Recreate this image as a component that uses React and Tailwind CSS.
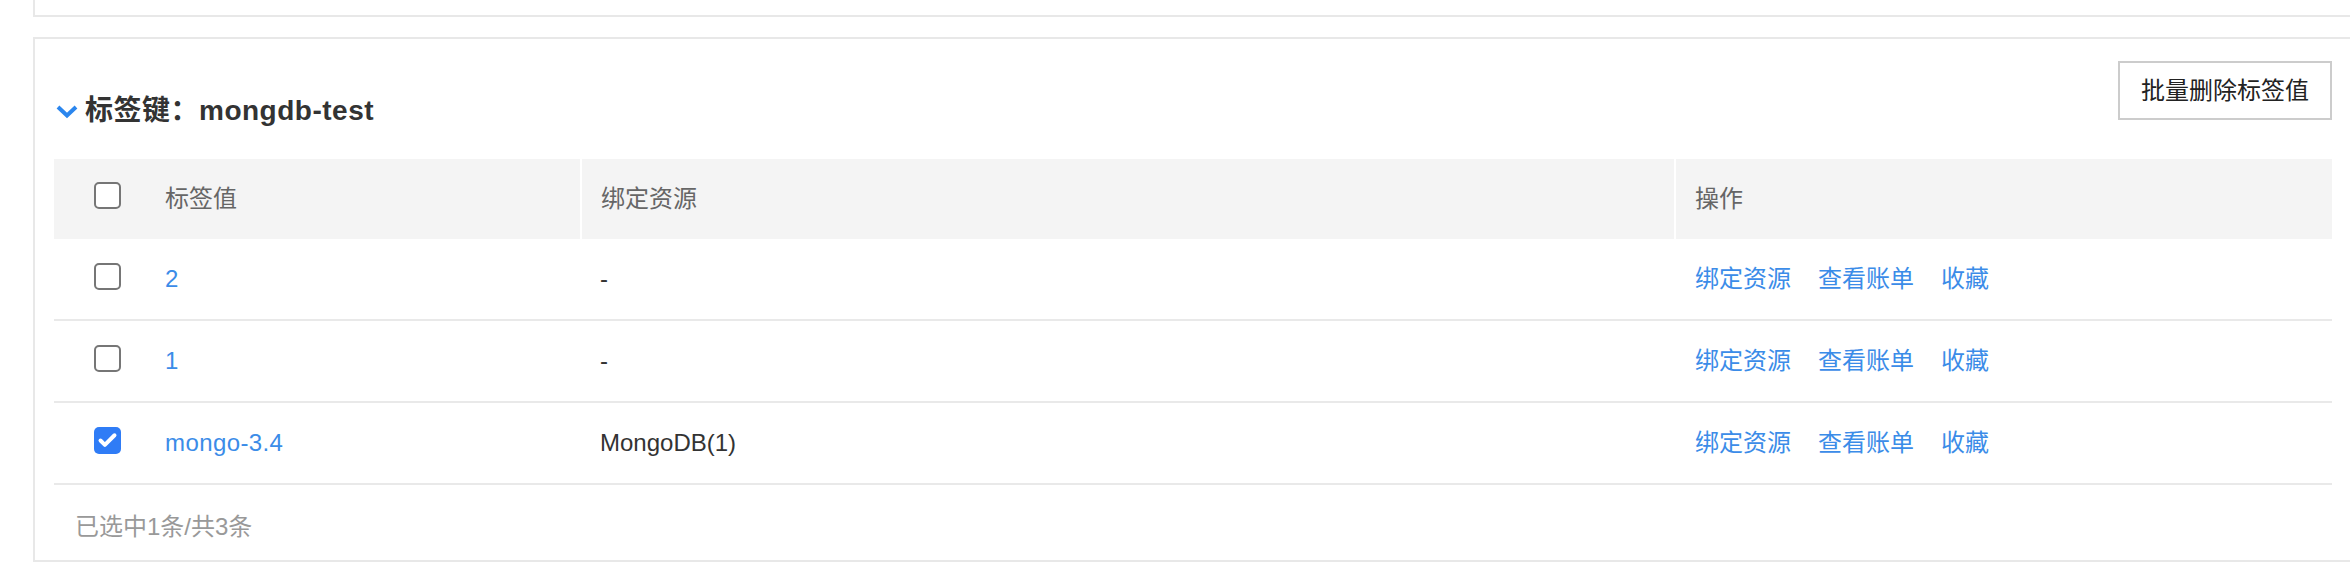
import { Check } from "lucide-react";

const rows = [
  { value: "2", resource: "-", checked: false },
  { value: "1", resource: "-", checked: false },
  { value: "mongo-3.4", resource: "MongoDB(1)", checked: true },
];

function Box({ checked }) {
  if (checked) {
    return (
      <span className="flex h-[27px] w-[27px] items-center justify-center rounded-[5px] bg-[#2f7cf6]">
        <Check size={21} strokeWidth={4.5} color="#fff" />
      </span>
    );
  }
  return <span className="block h-[27px] w-[27px] rounded-[5px] border-2 border-[#767676] bg-white" />;
}

function Row({ row }) {
  return (
    <div className="grid h-[82px] grid-cols-[526px_1094px_1fr] border-b-2 border-[#e9e9e9] text-[24px]">
      <div className="flex items-center pl-[40px]">
        <span className="-mt-[6px]">
          <Box checked={row.checked} />
        </span>
        <span className="ml-[44px] tracking-[0.4px] text-[#3b8ce8]">{row.value}</span>
      </div>
      <div className="flex items-center pl-[20px] text-[#333]">{row.resource}</div>
      <div className="flex items-center gap-[27px] pl-[21px] text-[#3b8ce8]">
        <span>绑定资源</span>
        <span>查看账单</span>
        <span>收藏</span>
      </div>
    </div>
  );
}

export default function App() {
  return (
    <div
      className="min-h-[570px] w-[2350px] overflow-hidden bg-white"
      style={{ fontFamily: '"Liberation Sans", "Noto Sans CJK SC", sans-serif' }}
    >
      <div className="ml-[33px] h-[17px] border-b-2 border-l-2 border-[#e8e8e8]" />

      <div className="ml-[33px] mt-[20px] border-y-2 border-l-2 border-[#e8e8e8] pl-[19px] pr-[18px] pt-[22px]">
        <div className="flex items-start justify-between">
          <div className="mt-[30px] flex h-[40px] items-center">
            <svg width="24" height="16" viewBox="0 0 24 16" className="ml-[1px] mr-[6px]">
              <path d="M3 4 L12 12.5 L21 4" fill="none" stroke="#2b86ee" strokeWidth="4" />
            </svg>
            <span className="text-[28px] font-bold tracking-[0.5px] text-[#333]">标签键：mongdb-test</span>
          </div>
          <button className="h-[59px] border-2 border-[#cccccc] bg-white px-[21px] text-[24px] text-[#222]">
            批量删除标签值
          </button>
        </div>

        <div className="mt-[28px]">
          <div className="grid h-[80px] grid-cols-[526px_1094px_1fr] bg-[#f4f4f4] text-[24px] text-[#666]">
            <div className="flex items-center pl-[40px]">
              <span className="-mt-[8px]">
                <Box checked={false} />
              </span>
              <span className="ml-[44px]">标签值</span>
            </div>
            <div className="flex items-center border-l-2 border-white pl-[19px]">绑定资源</div>
            <div className="flex items-center border-l-2 border-white pl-[19px]">操作</div>
          </div>
          {rows.map((row) => (
            <Row key={row.value} row={row} />
          ))}
          <div className="flex h-[75px] items-center pl-[21px] pt-[8px] text-[24px] text-[#999]">
            已选中1条/共3条
          </div>
        </div>
      </div>
    </div>
  );
}
